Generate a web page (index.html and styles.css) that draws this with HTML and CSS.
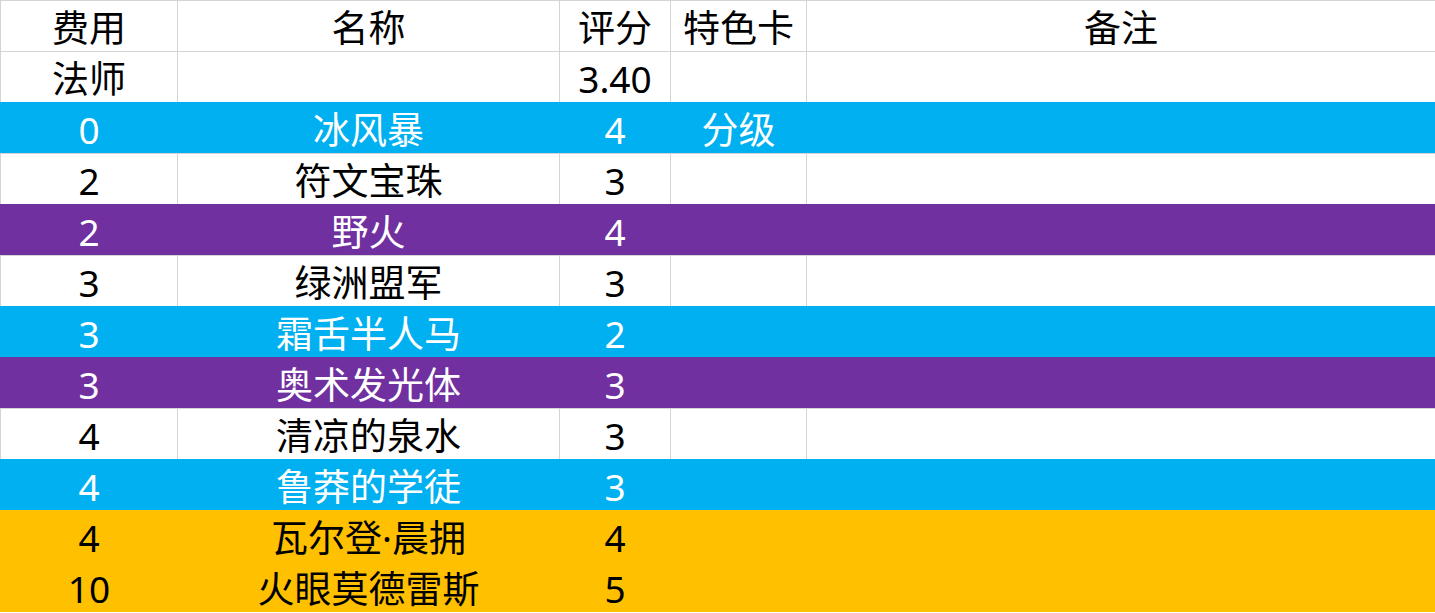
FILE: index.html
```html
<!DOCTYPE html>
<html lang="zh-CN">
<head>
<meta charset="utf-8">
<title>法师卡牌评分</title>
<link rel="stylesheet" href="styles.css">
</head>
<body>
<div class="sheet">
  <div class="row">
    <div class="cell">费用</div><div class="cell">名称</div><div class="cell">评分</div><div class="cell">特色卡</div><div class="cell">备注</div>
  </div>
  <div class="row">
    <div class="cell">法师</div><div class="cell"></div><div class="cell">3.40</div><div class="cell"></div><div class="cell"></div>
  </div>
  <div class="row blue">
    <div class="cell">0</div><div class="cell">冰风暴</div><div class="cell">4</div><div class="cell">分级</div><div class="cell"></div>
  </div>
  <div class="row">
    <div class="cell">2</div><div class="cell">符文宝珠</div><div class="cell">3</div><div class="cell"></div><div class="cell"></div>
  </div>
  <div class="row purple">
    <div class="cell">2</div><div class="cell">野火</div><div class="cell">4</div><div class="cell"></div><div class="cell"></div>
  </div>
  <div class="row">
    <div class="cell">3</div><div class="cell">绿洲盟军</div><div class="cell">3</div><div class="cell"></div><div class="cell"></div>
  </div>
  <div class="row blue">
    <div class="cell">3</div><div class="cell">霜舌半人马</div><div class="cell">2</div><div class="cell"></div><div class="cell"></div>
  </div>
  <div class="row purple">
    <div class="cell">3</div><div class="cell">奥术发光体</div><div class="cell">3</div><div class="cell"></div><div class="cell"></div>
  </div>
  <div class="row">
    <div class="cell">4</div><div class="cell">清凉的泉水</div><div class="cell">3</div><div class="cell"></div><div class="cell"></div>
  </div>
  <div class="row blue">
    <div class="cell">4</div><div class="cell">鲁莽的学徒</div><div class="cell">3</div><div class="cell"></div><div class="cell"></div>
  </div>
  <div class="row gold">
    <div class="cell">4</div><div class="cell">瓦尔登·晨拥</div><div class="cell">4</div><div class="cell"></div><div class="cell"></div>
  </div>
  <div class="row gold">
    <div class="cell">10</div><div class="cell">火眼莫德雷斯</div><div class="cell">5</div><div class="cell"></div><div class="cell"></div>
  </div>
</div>
</body>
</html>
```

FILE: styles.css
```css
html, body {
  margin: 0;
  padding: 0;
  background: #ffffff;
}

body {
  font-family: "Noto Sans", "Noto Sans CJK SC", sans-serif;
  font-size: 37px;
  color: #000000;
  overflow: hidden;
}

.sheet {
  display: flex;
  flex-direction: column;
  width: 1435px;
}

.row {
  --line: #d4d4d4;
  display: grid;
  grid-template-columns: 178px 382px 111px 136px 1fr;
  height: 51px;
  box-sizing: border-box;
  border-top: 1px solid var(--line);
}

.cell {
  box-sizing: border-box;
  height: 50px;
  border-right: 1px solid var(--line);
  line-height: 53px;
  text-align: center;
  white-space: nowrap;
}

.cell:first-child {
  border-left: 1px solid var(--line);
}

.cell:last-child {
  border-right: none;
}

.blue {
  --line: transparent;
  background: #00b0f0;
  color: #ffffff;
}

.purple {
  --line: transparent;
  background: #7030a0;
  color: #ffffff;
}

.gold {
  --line: transparent;
  background: #ffc000;
  color: #000000;
}
```
